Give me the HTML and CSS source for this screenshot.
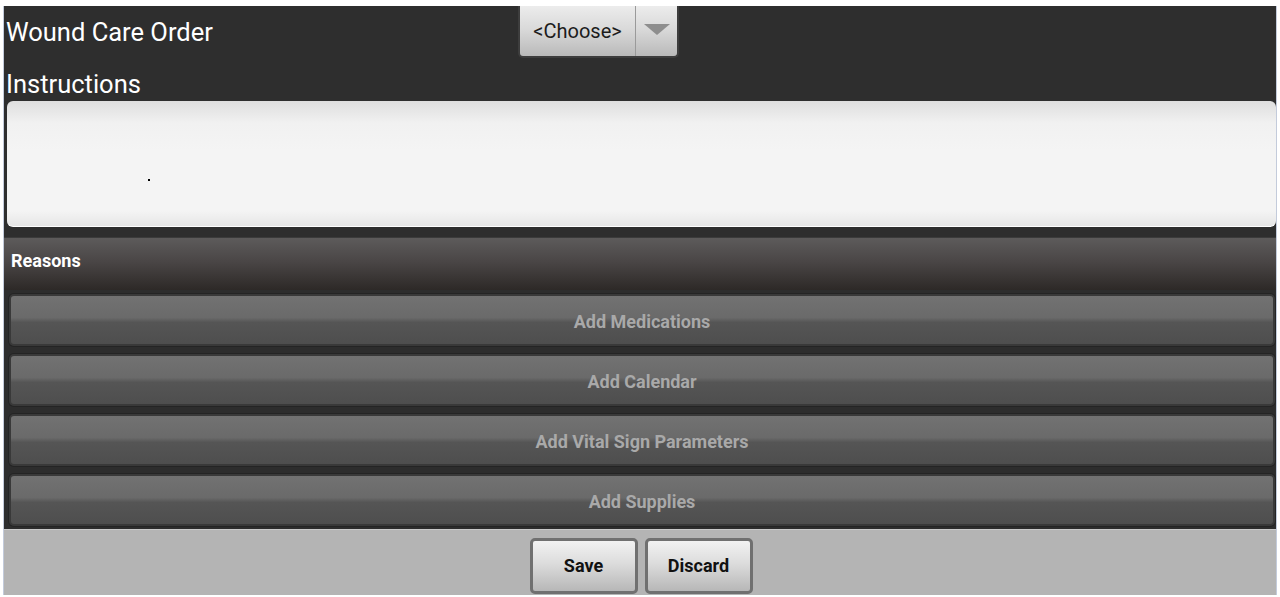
FILE: index.html
```html
<!DOCTYPE html>
<html>
<head>
<meta charset="utf-8">
<link rel="stylesheet" href="styles.css">
</head>
<body>
<div class="frame">
  <div class="top">
    <div class="row-title">
      <div class="title">Wound Care Order</div>
      <div class="select">
        <span class="select-text">&lt;Choose&gt;</span>
        <span class="select-arrow"><span class="tri"></span></span>
      </div>
    </div>
    <div class="label">Instructions</div>
    <div class="textarea"><span class="dot"></span></div>
  </div>
  <div class="section">Reasons</div>
  <div class="actions">
    <div class="action">Add Medications</div>
    <div class="action">Add Calendar</div>
    <div class="action">Add Vital Sign Parameters</div>
    <div class="action">Add Supplies</div>
  </div>
  <div class="footer">
    <div class="btn">Save</div>
    <div class="btn">Discard</div>
  </div>
</div>
</body>
</html>
```

FILE: styles.css
```css
html, body {
  margin: 0;
  padding: 0;
  background: #ffffff;
}
body {
  font-family: Roboto, "Liberation Sans", sans-serif;
}
.frame {
  margin: 6px 3px 0 3px;
  width: 1274px;
  border-left: 1px solid #c3cbdb;
  border-right: 1px solid #c3cbdb;
  box-sizing: border-box;
  height: 589px;
  display: flex;
  flex-direction: column;
  background: #2e2e2e;
}
.top {
  background: #2e2e2e;
  display: flex;
  flex-direction: column;
  padding-bottom: 10px;
}
.row-title {
  display: flex;
  align-items: flex-start;
  height: 52px;
}
.title {
  width: 512px;
  padding-left: 2px;
  color: #ffffff;
  font-size: 25.5px;
  line-height: 52px;
}
.select {
  width: 161px;
  height: 52px;
  box-sizing: border-box;
  border-radius: 0 0 5px 5px;
  border: 2px solid #3d3d3d;
  border-top: none;
  background: linear-gradient(#ececec, #dadada 45%, #b9b9b9);
  display: flex;
  align-items: stretch;
}
.select-text {
  width: 115px;
  display: flex;
  align-items: center;
  justify-content: center;
  font-size: 20px;
  color: #1c1c1c;
}
.select-arrow {
  flex: 1;
  border-left: 1px solid #9a9a9a;
  display: flex;
  align-items: center;
  justify-content: center;
  padding-bottom: 4px;
}
.tri {
  width: 0;
  height: 0;
  border-left: 13px solid transparent;
  border-right: 13px solid transparent;
  border-top: 11px solid #8e8e8e;
}
.label {
  color: #ffffff;
  font-size: 25.5px;
  line-height: 34px;
  height: 43px;
  box-sizing: border-box;
  padding-top: 9px;
  padding-left: 2px;
}
.textarea {
  margin: 0 0 0 3px;
  height: 126px;
  border-radius: 6px;
  background: linear-gradient(#dedede, #f1f1f1 22px, #f4f4f4 40%, #f4f4f4 88%, #e6e6e6);
  border-bottom: 1px solid #ffffff;
  box-sizing: border-box;
  position: relative;
}
.dot {
  position: absolute;
  left: 141px;
  top: 78px;
  width: 2px;
  height: 2px;
  background: #000;
}
.section {
  height: 53px;
  background: linear-gradient(#5d5b5b, #4a4646 45%, #2d2927);
  color: #ffffff;
  font-weight: bold;
  font-size: 18px;
  line-height: 46px;
  padding-left: 7px;
  border-top: 1px solid #3b3b3b;
  box-sizing: border-box;
}
.actions {
  display: flex;
  flex-direction: column;
  gap: 8px;
  padding: 4px 1px 3px 5px;
  background: #2d2d2d;
}
.action {
  height: 52px;
  box-sizing: border-box;
  border: 2px solid #393939;
  border-radius: 5px;
  background: linear-gradient(#727272, #6a6a6a 45%, #555555 55%, #4e4e4e);
  color: #a9a9a9;
  font-weight: bold;
  font-size: 18px;
  padding-top: 3px;
  display: flex;
  align-items: center;
  justify-content: center;
  box-shadow: 0 0 0 1px #242424;
}
.footer {
  flex: 1;
  background: #b4b4b4;
  display: flex;
  justify-content: center;
  align-items: flex-start;
  gap: 7px;
  padding-top: 8px;
  padding-left: 2px;
  border-top: 1px solid #c9c9c9;
}
.btn {
  width: 108px;
  height: 56px;
  box-sizing: border-box;
  border: 3px solid #707070;
  border-radius: 5px;
  background: linear-gradient(#f2f2f2, #dcdcdc 45%, #b7b7b7);
  color: #111111;
  font-weight: bold;
  font-size: 18px;
  padding-bottom: 2px;
  display: flex;
  align-items: center;
  justify-content: center;
}
```
